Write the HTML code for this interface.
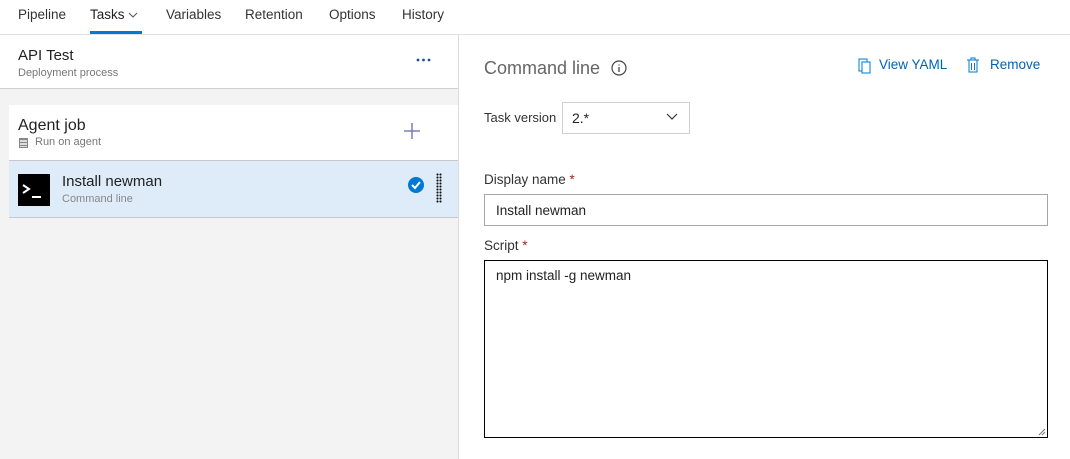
<!DOCTYPE html>
<html><head><meta charset="utf-8"><style>
*{box-sizing:border-box;margin:0;padding:0}
body{width:1070px;height:459px;overflow:hidden;background:#fff;font-family:"Liberation Sans",sans-serif;color:#333;position:relative}
.a{position:absolute}
.nav span{position:absolute;top:7px;font-size:14px;color:#333}
</style></head><body>
<div class="nav">
<span style="left:18px;font-size:13.5px">Pipeline</span>
<span style="left:90px;color:#222;font-size:13.5px">Tasks <svg width="10" height="8" viewBox="0 0 10 8"><path d="M1 2l4 4 4-4" fill="none" stroke="#555" stroke-width="1"/></svg></span>
<span style="left:166px;font-size:13.5px">Variables</span>
<span style="left:245px;font-size:13.5px">Retention</span>
<span style="left:329px;font-size:13.5px">Options</span>
<span style="left:402px;font-size:13.5px">History</span>
</div>
<div class="a" style="left:90px;top:31px;width:52px;height:3px;background:#0078d4"></div>
<div class="a" style="left:0;top:34px;width:1070px;height:1px;background:#e0e0e0"></div>
<div class="a" style="left:0;top:35px;width:458px;height:424px;background:#f3f3f3"></div>
<div class="a" style="left:458px;top:35px;width:1px;height:424px;background:#dcdcdc"></div>
<div class="a" style="left:0;top:35px;width:458px;height:54px;background:#fff;border-bottom:1px solid #d0d0d0"></div>
<div class="a" style="left:18px;top:47px;font-size:15px;color:#222">API Test</div>
<div class="a" style="left:18px;top:67px;font-size:11px;color:#777">Deployment process</div>
<svg class="a" style="left:416px;top:58px" width="16" height="4"><circle cx="2" cy="2" r="1.4" fill="#1f4e8c"/><circle cx="7.5" cy="2" r="1.4" fill="#1f4e8c"/><circle cx="13" cy="2" r="1.4" fill="#1f4e8c"/></svg>
<div class="a" style="left:9px;top:105px;width:449px;height:56px;background:#fff"></div>
<div class="a" style="left:18px;top:117px;font-size:16px;color:#222">Agent job</div>
<div class="a" style="left:19px;top:138px;width:9px;height:10px;border:1px solid #888;background:repeating-linear-gradient(#888 0 1px,#ddd 1px 3px)"></div>
<div class="a" style="left:35px;top:136px;font-size:11px;color:#777">Run on agent</div>
<svg class="a" style="left:403px;top:122px" width="18" height="18"><path d="M9 1v16M1 9h16" stroke="#7a7fb5" stroke-width="1.5"/></svg>
<div class="a" style="left:9px;top:160px;width:449px;height:58px;background:#deecf9;border-top:1px solid #c8c8c8;border-bottom:1px solid #c8c8c8"></div>
<div class="a" style="left:18px;top:174px;width:32px;height:32px;background:#000"></div>
<svg class="a" style="left:18px;top:174px" width="32" height="32"><path d="M5 11l6 4-6 4" fill="none" stroke="#fff" stroke-width="2"/><path d="M14 23h9" stroke="#fff" stroke-width="2"/></svg>
<div class="a" style="left:62px;top:173px;font-size:15px;color:#222">Install newman</div>
<div class="a" style="left:62px;top:193px;font-size:11px;color:#888">Command line</div>
<svg class="a" style="left:408px;top:177px" width="16" height="16"><circle cx="8" cy="8" r="8" fill="#0078d4"/><path d="M4 8l3 3 5-6" fill="none" stroke="#fff" stroke-width="2"/></svg>
<div class="a" style="left:436px;top:173px;width:6px;height:30px;background:radial-gradient(circle,#111 0.9px,transparent 1.2px) 0 0/3px 3px"></div>
<div class="a" style="left:484px;top:58px;font-size:18px;color:#666">Command line</div>
<svg class="a" style="left:611px;top:60px" width="16" height="16"><circle cx="8" cy="8" r="7" fill="none" stroke="#444" stroke-width="1.2"/><path d="M8 7v5M8 4.5v1" stroke="#444" stroke-width="1.3"/></svg>
<svg class="a" style="left:856px;top:57px" width="16" height="17"><rect x="3" y="2" width="8" height="12" fill="none" stroke="#0078d4"/><rect x="6" y="5" width="8" height="11" fill="#fff" stroke="#0078d4"/></svg>
<div class="a" style="left:879px;top:57px;font-size:13.5px;color:#0063b1">View YAML</div>
<svg class="a" style="left:966px;top:57px" width="14" height="16"><path d="M1 3h12M5 3V1h4v2M3 3v12h8V3M5.5 6v7M8.5 6v7" fill="none" stroke="#0078d4"/></svg>
<div class="a" style="left:990px;top:57px;font-size:13.5px;color:#0063b1">Remove</div>
<div class="a" style="left:484px;top:110px;font-size:13px;color:#333">Task version</div>
<div class="a" style="left:562px;top:102px;width:128px;height:32px;border:1px solid #d0d0d0"></div>
<div class="a" style="left:572px;top:110px;font-size:14px;color:#222">2.*</div>
<svg class="a" style="left:666px;top:113px" width="12" height="8"><path d="M1 1l5 5 5-5" fill="none" stroke="#333" stroke-width="1.2"/></svg>
<div class="a" style="left:484px;top:172px;font-size:13.5px;color:#333">Display name <span style="color:#a4262c">*</span></div>
<div class="a" style="left:484px;top:194px;width:564px;height:32px;border:1px solid #a6a6a6"></div>
<div class="a" style="left:496px;top:203px;font-size:13.5px;color:#222">Install newman</div>
<div class="a" style="left:484px;top:238px;font-size:13.5px;color:#333">Script <span style="color:#a4262c">*</span></div>
<div class="a" style="left:484px;top:260px;width:564px;height:178px;border:1px solid #000"></div>
<div class="a" style="left:496px;top:268px;font-size:13.5px;color:#222">npm install -g newman</div>
<svg class="a" style="left:1038px;top:428px" width="8" height="8"><path d="M7 1L1 7M7 4L4 7" stroke="#777"/></svg>
</body></html>
